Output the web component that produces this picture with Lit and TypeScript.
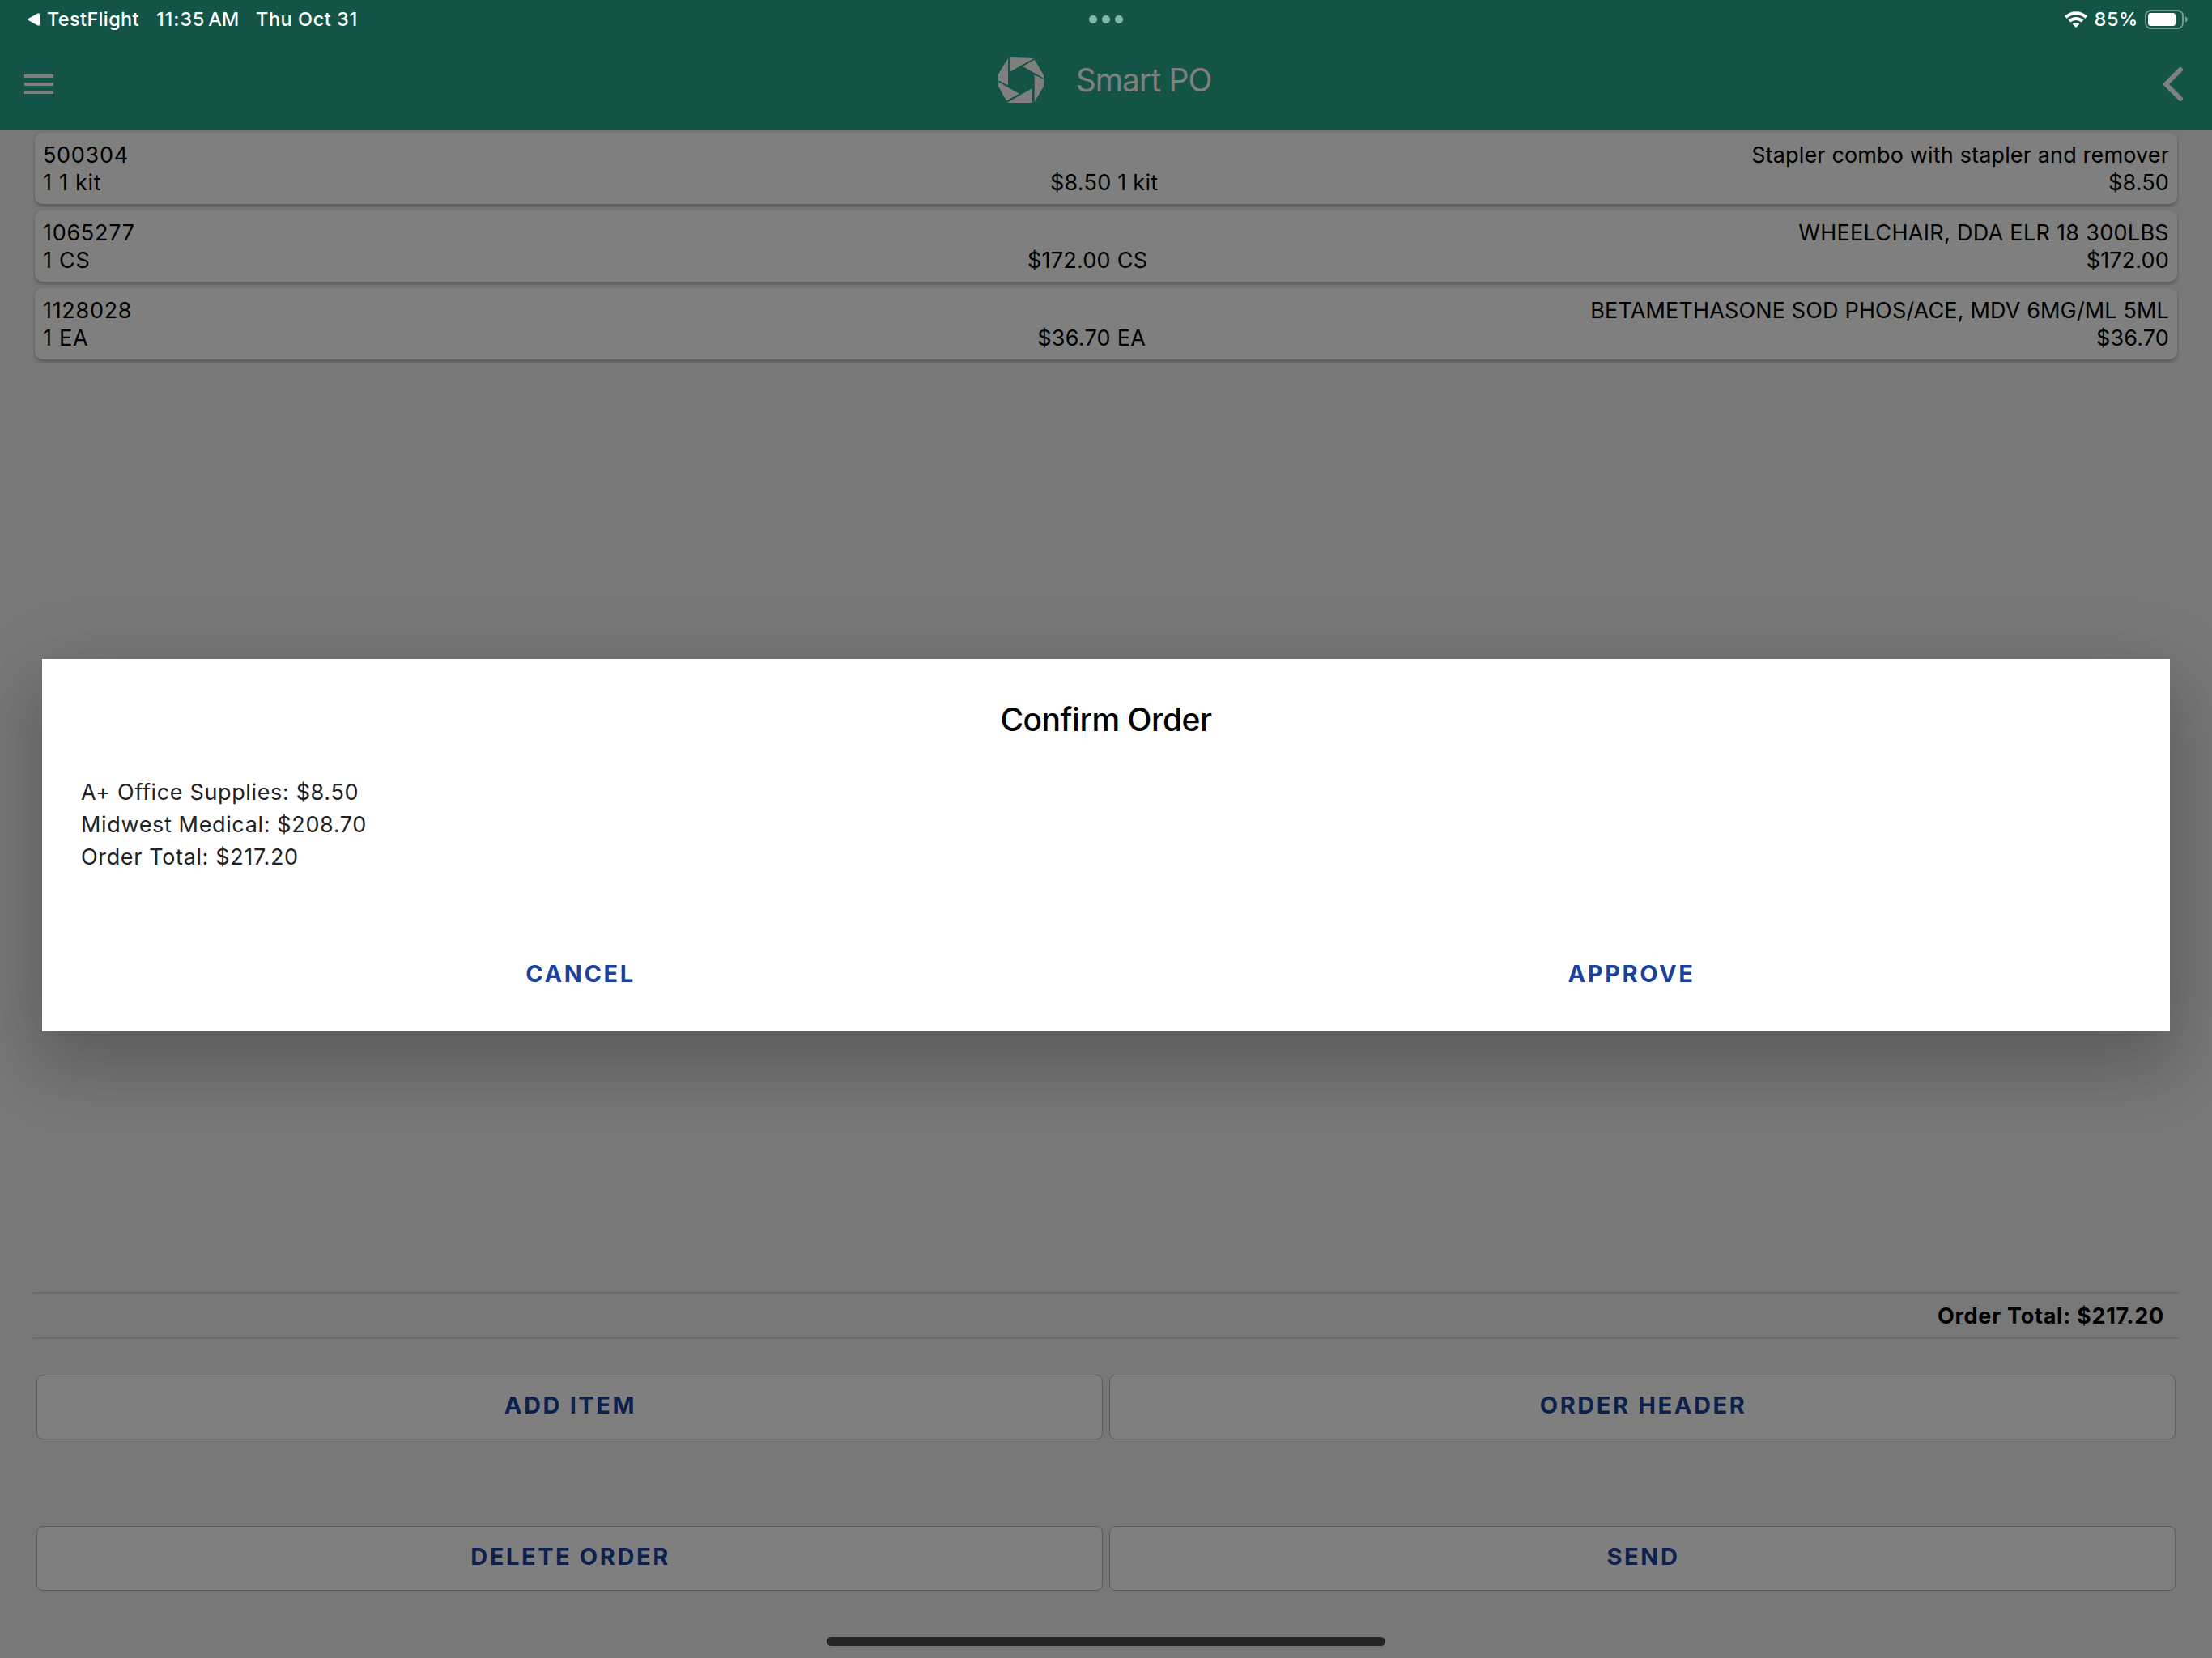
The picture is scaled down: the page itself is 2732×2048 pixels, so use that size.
import { LitElement, html, css } from 'lit';
import { customElement, property } from 'lit/decorators.js';

interface OrderItem {
  sku: string;
  description: string;
  quantity: string;
  price: string;
  total: string;
}

const items: OrderItem[] = [
  {
    sku: '500304',
    description: 'Stapler combo with stapler and remover',
    quantity: '1 1 kit',
    price: '$8.50 1 kit',
    total: '$8.50',
  },
  {
    sku: '1065277',
    description: 'WHEELCHAIR, DDA ELR 18 300LBS',
    quantity: '1 CS',
    price: '$172.00 CS',
    total: '$172.00',
  },
  {
    sku: '1128028',
    description: 'BETAMETHASONE SOD PHOS/ACE, MDV 6MG/ML 5ML',
    quantity: '1 EA',
    price: '$36.70 EA',
    total: '$36.70',
  },
];

const summary = [
  'A+ Office Supplies: $8.50',
  'Midwest Medical: $208.70',
  'Order Total: $217.20',
];

@customElement('status-bar')
export class StatusBar extends LitElement {
  static styles = css`
    :host {
      display: grid;
      grid-template-columns: 1fr auto 1fr;
      align-items: center;
      height: 48px;
      padding: 0 30px 0 34px;
      box-sizing: border-box;
      color: #fff;
      font-size: 23.5px;
      font-weight: 500;
      line-height: 47px;
      white-space: nowrap;
    }
    svg {
      display: block;
    }
    .left {
      display: flex;
      align-items: center;
      gap: 21px;
      height: 47px;
      align-self: start;
    }
    .back {
      display: flex;
      align-items: center;
      gap: 9px;
      letter-spacing: 0.35px;
    }
    .time {
      letter-spacing: 0.9px;
    }
    .ampm {
      margin-left: 4px;
      letter-spacing: -0.2px;
    }
    .date {
      letter-spacing: 0.55px;
    }
    .dots {
      display: flex;
      gap: 6px;
      margin-right: 4px;
    }
    .dot {
      width: 10px;
      height: 10px;
      border-radius: 50%;
      background: #7fbbb0;
    }
    .right {
      display: flex;
      align-items: center;
      justify-content: flex-end;
      height: 47px;
      align-self: start;
    }
    .percent {
      margin: 0 8px 0 9px;
      letter-spacing: 0.6px;
    }
  `;

  render() {
    return html`
      <div class="left">
        <span class="back">
          <svg width="15" height="16" viewBox="0 0 15 16">
            <path d="M1 7Q-.4 8 1 9L12.6 15.4Q15 16.200 15 14V2Q15-.2 12.600.6Z" fill="#fff" />
          </svg>
          <span>TestFlight</span>
        </span>
        <span class="time">11:35<span class="ampm">AM</span></span>
        <span class="date">Thu Oct 31</span>
      </div>
      <div class="dots">
        <span class="dot"></span><span class="dot"></span><span class="dot"></span>
      </div>
      <div class="right">
        <svg width="28" height="20" viewBox="0 0 28 20">
          <g fill="none" stroke="#fff" stroke-width="3.9">
            <path d="M1.300 7.300A18.300 18.300 0 0 1 26.700 7.300" />
            <path d="M6 12.200A11.600 11.600 0 0 1 22 12.200" />
          </g>
          <path d="M14 20L9.700 15.700A6.300 6.300 0 0 1 18.300 15.700Z" fill="#fff" />
        </svg>
        <span class="percent">85%</span>
        <svg width="53" height="24" viewBox="0 0 53 24">
          <rect x="1" y="1" width="46" height="22" rx="6.500" fill="none" stroke="#729990" stroke-width="2" />
          <rect x="4" y="4" width="34" height="16" rx="3.500" fill="#fff" />
          <path d="M50 8Q53 9.500 53 12T50 16Z" fill="#729990" />
        </svg>
      </div>
    `;
  }
}

@customElement('order-item')
export class OrderItemRow extends LitElement {
  @property({ attribute: false }) item!: OrderItem;

  static styles = css`
    :host {
      display: block;
      overflow: hidden;
      padding: 4px 2px;
    }
    .card {
      padding: 11px 10px 9px;
      border-radius: 10px;
      background: #fff;
      box-shadow: 0 6px 4px -4px rgba(0, 0, 0, 0.06), 0 4px 4px 0 rgba(0, 0, 0, 0.12),
        0 2px 10px 0 rgba(0, 0, 0, 0.12);
    }
    .line {
      display: flex;
      justify-content: space-between;
      line-height: 34px;
      letter-spacing: 0.15px;
    }
    .sku {
      letter-spacing: 0.7px;
    }
    .quantity {
      letter-spacing: 0.7px;
    }
    .price {
      margin-right: 2px;
      letter-spacing: 0.25px;
    }
    :host(:nth-child(2)) .description {
      letter-spacing: 0.3px;
    }
  `;

  render() {
    return html`
      <div class="card">
        <div class="line">
          <span class="sku">${this.item.sku}</span>
          <span class="description">${this.item.description}</span>
        </div>
        <div class="line">
          <span class="quantity">${this.item.quantity}</span>
          <span class="price">${this.item.price}</span>
          <span>${this.item.total}</span>
        </div>
      </div>
    `;
  }
}

@customElement('app-root')
export class AppRoot extends LitElement {
  static styles = css`
    :host {
      display: block;
      position: relative;
      width: 2732px;
      height: 2048px;
      overflow: hidden;
      background: #f0f0f0;
      color: #000;
      font-family: Inter, 'Liberation Sans', sans-serif;
      font-size: 27px;
      font-kerning: normal;
    }
    svg {
      display: block;
    }
    .page {
      display: flex;
      flex-direction: column;
      height: 100%;
    }
    .toolbar {
      display: grid;
      grid-template-columns: 1fr auto 1fr;
      align-items: center;
      height: 160px;
      padding: 48px 36px 0 30px;
      box-sizing: border-box;
      background: #28a88e;
      color: #fff;
    }
    .brand {
      display: flex;
      align-items: center;
      gap: 40px;
      margin: 0 0 10px 3px;
      font-size: 39px;
      line-height: 48px;
      letter-spacing: -0.9px;
    }
    .chevron {
      justify-self: end;
    }
    .items {
      flex: 1;
      padding: 0 41px;
    }
    .total {
      margin: 0 41px 44px;
      padding: 1px 18px 0 0;
      border: solid #d8d8d8;
      border-width: 2px 0;
      text-align: right;
      font-weight: 700;
      line-height: 53px;
      letter-spacing: 0.73px;
    }
    .actions {
      display: grid;
      grid-template-columns: 1fr 1fr;
      gap: 107px 8px;
      padding: 0 45px 83px;
    }
    button {
      margin: 0;
      padding: 0;
      border: 0;
      background: none;
      color: #1a429c;
      font: 700 29px/80px Inter, 'Liberation Sans', sans-serif;
      letter-spacing: 2.6px;
      text-transform: uppercase;
    }
    .actions button {
      height: 80px;
      padding: 0 0 5px 2px;
      box-sizing: border-box;
      border: 1px solid #b4b4b4;
      border-radius: 8px;
      background: #fff;
      line-height: 73px;
    }
    .backdrop {
      position: absolute;
      inset: 0;
      background: rgba(0, 0, 0, 0.5);
    }
    .status {
      position: absolute;
      top: 0;
      left: 0;
      right: 0;
    }
    .modal {
      position: absolute;
      top: 814px;
      left: 52px;
      right: 52px;
      height: 460px;
      padding: 51px 16px 31px;
      box-sizing: border-box;
      display: flex;
      flex-direction: column;
      background: #fff;
      box-shadow: 0 48px 76px 6px rgba(0, 0, 0, 0.14), 0 18px 92px 10px rgba(0, 0, 0, 0.11);
    }
    .title {
      text-align: center;
      font-size: 39px;
      font-weight: 500;
      line-height: 48px;
      letter-spacing: -0.47px;
    }
    .summary {
      flex: 1;
      padding: 46px 32px 0;
      color: #222;
      line-height: 40px;
      letter-spacing: 0.64px;
    }
    .modal-actions {
      display: grid;
      grid-template-columns: 1fr 1fr;
    }
    .home-indicator {
      position: absolute;
      left: 1021px;
      bottom: 15px;
      width: 690px;
      height: 11px;
      border-radius: 6px;
      background: #252525;
    }
  `;

  render() {
    return html`
      <div class="page">
        <header class="toolbar">
          <svg width="36" height="24" viewBox="0 0 36 24" fill="#fff">
            <path d="M0 0h36v4H0zM0 10h36v4H0zM0 20h36v4H0z" />
          </svg>
          <div class="brand">
            <svg width="56" height="56" viewBox="0 0 168 168" fill="#fff">
              <path d="M44 0L132 3L43 53Z" />
              <path d="M91 33L134 8L168 65V77Z" />
              <path d="M134 65L168 80V107L134 164Z" />
              <path d="M32 168L124 115L126 168Z" />
              <path d="M0 90L77 134L30 161L0 106Z" />
              <path d="M36 2V103L0 85V62Z" />
            </svg>
            <span>Smart PO</span>
          </div>
          <svg class="chevron" width="25" height="42" viewBox="0 0 25 42">
            <path
              d="M22 3L4 21L22 39"
              fill="none"
              stroke="#fff"
              stroke-width="6"
              stroke-linecap="round"
              stroke-linejoin="round"
            />
          </svg>
        </header>
        <div class="items">
          ${items.map((item) => html`<order-item .item=${item}></order-item>`)}
        </div>
        <div class="total">Order Total: $217.20</div>
        <div class="actions">
          <button>Add Item</button>
          <button>Order Header</button>
          <button>Delete Order</button>
          <button>Send</button>
        </div>
      </div>
      <div class="backdrop"></div>
      <div class="modal">
        <div class="title">Confirm Order</div>
        <div class="summary">${summary.map((line) => html`<div>${line}</div>`)}</div>
        <div class="modal-actions">
          <button>Cancel</button>
          <button>Approve</button>
        </div>
      </div>
      <status-bar class="status"></status-bar>
      <div class="home-indicator"></div>
    `;
  }
}
